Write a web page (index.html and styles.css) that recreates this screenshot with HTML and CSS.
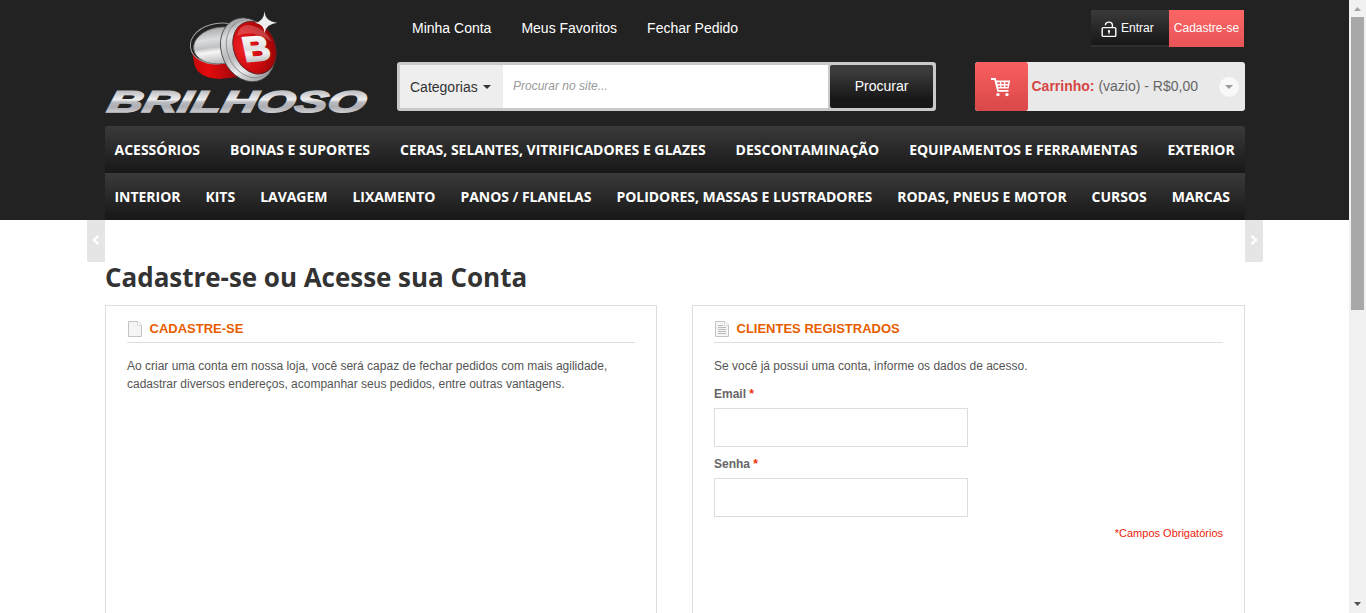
FILE: index.html
```html
<!DOCTYPE html>
<html lang="pt-BR">
<head>
<meta charset="utf-8">
<title>Brilhoso - Cadastre-se ou Acesse sua Conta</title>
<link rel="stylesheet" href="styles.css">
</head>
<body>
<div class="viewport">
<div class="page">
  <header class="header">
    <div class="container">
      <div class="header-top">
        <a class="logo">
          <svg width="270" height="112" viewBox="105 8 270 112">
            <defs>
              <linearGradient id="silver" x1="0" y1="0" x2="0" y2="1">
                <stop offset="0" stop-color="#a9aaac"/><stop offset=".3" stop-color="#dcdddf"/><stop offset=".52" stop-color="#c0c1c3"/><stop offset=".65" stop-color="#f6f6f6"/><stop offset="1" stop-color="#b4b5b7"/>
              </linearGradient>
              <linearGradient id="mark" gradientUnits="userSpaceOnUse" x1="0" y1="-25" x2="0" y2="0">
                <stop offset="0" stop-color="#fafafa"/><stop offset=".5" stop-color="#dedfe0"/><stop offset=".7" stop-color="#f4f4f4"/><stop offset="1" stop-color="#c4c5c7"/>
              </linearGradient>
              <linearGradient id="ring" x1="0" y1="0" x2="0" y2="1">
                <stop offset="0" stop-color="#9e9fa1"/><stop offset=".2" stop-color="#dedfe0"/><stop offset=".5" stop-color="#b9babc"/><stop offset=".75" stop-color="#ececed"/><stop offset="1" stop-color="#a2a3a6"/>
              </linearGradient>
              <linearGradient id="word" gradientUnits="userSpaceOnUse" x1="0" y1="-22" x2="0" y2="0">
                <stop offset="0" stop-color="#b9babd"/><stop offset=".25" stop-color="#dadadc"/><stop offset=".42" stop-color="#ececed"/><stop offset=".55" stop-color="#b9babf"/><stop offset=".75" stop-color="#adaeb4"/><stop offset="1" stop-color="#c9c9cc"/>
              </linearGradient>
              <linearGradient id="redbody"><stop offset="0" stop-color="#c30709"/><stop offset=".35" stop-color="#e50b0e"/><stop offset="1" stop-color="#9b0608"/></linearGradient>
              <radialGradient id="redlid" cx=".25" cy=".45" r=".8"><stop offset="0" stop-color="#ee2326"/><stop offset=".5" stop-color="#cf0a0d"/><stop offset="1" stop-color="#930305"/></radialGradient>
            </defs>
            <path d="M192 50 L194 63 Q197 78 220 79 L238 77 L232 55Z" fill="url(#redbody)"/>
            <ellipse cx="219" cy="43.5" rx="28.8" ry="20.3" transform="rotate(-8 219 43.5)" fill="#222" stroke="#a2a3a5" stroke-width="1"/>
            <ellipse cx="220.5" cy="45.5" rx="27" ry="18.2" transform="rotate(-8 220.5 45.5)" fill="url(#silver)" stroke="#6b6c6e" stroke-width=".8"/>
            <ellipse cx="247.7" cy="49.8" rx="26" ry="33" transform="rotate(-24 247.7 49.8)" fill="url(#ring)" stroke="#414244" stroke-width=".8"/>
            <ellipse cx="250.8" cy="48.8" rx="23.4" ry="29.8" transform="rotate(-24 250.8 48.8)" fill="none" stroke="#8b8c8f" stroke-width=".9"/>
            <ellipse cx="254.5" cy="47.7" rx="20.7" ry="27" transform="rotate(-22 254.5 47.7)" fill="url(#redlid)" stroke="#5d2022" stroke-width=".9"/>
            <path d="M237 36 Q240 22 253 26 Q265 28 272 42 Q254 29 237 36Z" fill="#fff" opacity=".22"/>
            <text x="0" y="0" transform="translate(245.2 61.8) rotate(-5) skewX(7)" class="logo-mark" textLength="27" lengthAdjust="spacingAndGlyphs" fill="url(#mark)" stroke="url(#mark)" stroke-width="1.8">B</text>
            <path d="M264.5 11 Q265 21.5 277.3 22.7 Q266 24 264.5 33 Q264 24 255 22.7 Q264 21.5 264.5 11Z" fill="#eee"/>
            <text x="0" y="0" transform="translate(106 112.3) skewX(-12)" class="logo-word" textLength="258" lengthAdjust="spacingAndGlyphs" fill="url(#word)" stroke="url(#word)" stroke-width="1.5">BRILHOSO</text>
          </svg>
        </a>
        <div class="header-main">
          <div class="header-row links-row">
            <nav class="links"><a>Minha Conta</a><a>Meus Favoritos</a><a>Fechar Pedido</a></nav>
            <div class="account">
              <a class="login">
                <svg width="16" height="17" viewBox="0 0 16 17" fill="none" stroke="#fff" stroke-width="1.4"><rect x="1.2" y="6.6" width="13.6" height="8.8" rx="1"/><path d="M4.4 4.3C4.4 0 11.4 0 11.4 4.3V6.6"/><path d="M8 9.2v3.8" stroke-width="1.2"/><circle cx="8" cy="10.2" r="1.1" fill="#fff" stroke="none"/></svg>
                <span>Entrar</span>
              </a>
              <a class="register">Cadastre-se</a>
            </div>
          </div>
          <div class="header-row">
            <form class="search">
              <div class="search-cat"><span>Categorias</span><i class="caret"></i></div>
              <div class="search-input">Procurar no site...</div>
              <div class="search-btn">Procurar</div>
            </form>
            <div class="cart">
              <div class="cart-icon">
                <svg width="20" height="19" viewBox="0 0 20 19"><path d="M0 1h4l3 11.8h10.5" fill="none" stroke="#fff" stroke-width="1.8"/><path fill="#fff" fill-rule="evenodd" d="M4 2.6h15.2l-1.6 8H6.4zM6.3 4.2v1.7h2.6V4.2zm4 0v1.7h2.6V4.2zm4 0v1.7h2.8l.3-1.7zM7 7.4l.4 1.7h1.8V7.4zm3.5 0v1.7h2.3V7.4zm3.8 0v1.7h2.1l.4-1.7z"/><circle cx="7" cy="16.6" r="1.7" fill="#fff"/><circle cx="16" cy="16.6" r="1.7" fill="#fff"/></svg>
              </div>
              <div class="cart-text"><b>Carrinho:</b> (vazio) - R$0,00</div>
              <div class="cart-toggle"><i class="caret"></i></div>
            </div>
          </div>
        </div>
      </div>
      <nav class="menu">
        <div class="menu-row wide"><a>ACESSÓRIOS</a><a>BOINAS E SUPORTES</a><a>CERAS, SELANTES, VITRIFICADORES E GLAZES</a><a>DESCONTAMINAÇÃO</a><a>EQUIPAMENTOS E FERRAMENTAS</a><a>EXTERIOR</a></div>
        <div class="menu-row"><a>INTERIOR</a><a>KITS</a><a>LAVAGEM</a><a>LIXAMENTO</a><a>PANOS / FLANELAS</a><a>POLIDORES, MASSAS E LUSTRADORES</a><a>RODAS, PNEUS E MOTOR</a><a>CURSOS</a><a>MARCAS</a></div>
      </nav>
    </div>
  </header>
  <div class="arrows">
    <span class="arrow prev"><svg width="8" height="12" viewBox="0 0 8 12"><path d="M6.3 1.8L2.2 6l4.1 4.2" fill="none" stroke="#fff" stroke-width="2.5"/></svg></span>
    <span class="arrow next"><svg width="8" height="12" viewBox="0 0 8 12"><path d="M1.7 1.8L5.8 6l-4.1 4.2" fill="none" stroke="#fff" stroke-width="2.5"/></svg></span>
  </div>
  <main class="container">
    <h1 class="title">Cadastre-se ou Acesse sua Conta</h1>
    <div class="panels">
      <section class="panel">
        <h2 class="panel-title">
          <svg width="16" height="17" viewBox="0 0 16 17"><path d="M1.5.5h9.5l3.5 3.5v11.5h-13z" fill="#f5f5f5" stroke="#c4c4c4"/><path d="M10.5.5v4h4" fill="#fff" stroke="#d8d8d8"/></svg>
          <span>CADASTRE-SE</span>
        </h2>
        <p class="copy">Ao criar uma conta em nossa loja, você será capaz de fechar pedidos com mais agilidade,<br>cadastrar diversos endereços, acompanhar seus pedidos, entre outras vantagens.</p>
      </section>
      <section class="panel right">
        <h2 class="panel-title">
          <svg width="16" height="17" viewBox="0 0 16 17"><path d="M1.5.5h9.5l3.5 3.5v11.5h-13z" fill="#f5f5f5" stroke="#c4c4c4"/><path d="M10.5.5v4h4" fill="#fff" stroke="#d8d8d8"/><path d="M4 4.5h5M4 6.5h8M4 8.5h8M4 10.5h8M4 12.5h8" stroke="#bcbcbc"/></svg>
          <span>CLIENTES REGISTRADOS</span>
        </h2>
        <p class="copy">Se você já possui uma conta, informe os dados de acesso.</p>
        <label class="label" for="email">Email <em>*</em></label>
        <input class="field" id="email" type="text">
        <label class="label" for="senha">Senha <em>*</em></label>
        <input class="field" id="senha" type="password">
        <p class="required">*Campos Obrigatórios</p>
      </section>
    </div>
  </main>
</div>
<div class="scrollbar">
  <svg class="up" width="7" height="4" viewBox="0 0 7 4"><path d="M0 4L3.5 0 7 4z" fill="#a3a3a3"/></svg>
  <div class="thumb"></div>
  <svg class="down" width="7" height="4" viewBox="0 0 7 4"><path d="M0 0l3.5 4L7 0z" fill="#505050"/></svg>
</div>
</div>
</body>
</html>
```
FILE: styles.css
```css
* { box-sizing: border-box; }
body { margin: 0; font: 12px/18px "Liberation Sans", Arial, sans-serif; color: #555; background: #fff; }
h1, h2, p { margin: 0; }
svg { display: block; flex: none; }
.viewport { display: flex; height: 613px; overflow: hidden; }
.page { width: 1349px; flex: none; }
.container { width: 1140px; margin-left: 105px; }

.header { background: #222; height: 220px; }
.header-top { display: flex; height: 126px; }
.logo { width: 292px; padding-top: 8px; }
.logo svg { overflow: visible; }
.logo-mark { font: bold 35px "Liberation Sans", sans-serif; }
.logo-word { font: italic bold 30px "Liberation Sans", sans-serif; }
.header-main { flex: 1; padding-top: 10px; white-space: nowrap; }
.header-row { display: flex; justify-content: space-between; }
.links-row { height: 52px; }
.links { display: flex; gap: 30px; padding: 9px 0 0 15px; font-size: 14px; color: #fff; }
.account { display: flex; height: 37px; color: #fff; font-size: 12px; line-height: 36px; padding-right: 1px; }
.login { display: flex; width: 78px; padding-left: 10px; gap: 4px; background: linear-gradient(#3a3a3a, #171717); border-bottom: 2px solid #303030; }
.login svg { margin-top: 11px; }
.register { width: 75px; text-align: center; background: linear-gradient(#fb6565, #e85557); }

.search { display: flex; width: 539px; height: 49px; border: 3px solid #c9c9c9; border-radius: 3px; background: #c9c9c9; }
.search-cat { display: flex; align-items: center; width: 103px; padding-left: 10px; gap: 5px; background: #eee; color: #333; font-size: 14px; }
.caret { width: 0; border: 4px solid transparent; border-top-color: currentColor; border-bottom: 0; }
.search-input { width: 325px; padding-left: 10px; background: #fff; font: italic 12px/43px "Liberation Sans", sans-serif; color: #999; }
.search-btn { width: 103px; margin-left: 2px; border-radius: 2px; background: linear-gradient(#3b3b3b 15%, #171717 80%); color: #fff; font-size: 14px; line-height: 42px; text-align: center; }

.cart { display: flex; align-items: center; width: 270px; height: 49px; border-radius: 3px; background: #e9e9e9; overflow: hidden; }
.cart-icon { display: flex; justify-content: center; align-items: center; width: 53px; height: 49px; padding: 1px 2px 0 0; border-radius: 3px; background: linear-gradient(#f95f60, #d94848); }
.cart-text { padding: 0 0 1px 3.5px; width: 191px; font-size: 14px; color: #666; }
.cart-text b { color: #d64545; }
.cart-toggle { display: flex; align-items: center; justify-content: center; width: 20px; height: 20px; border-radius: 50%; background: #f8f8f8; color: #999; }

.menu { color: #fff; font: bold 14px/47px "Open Sans", sans-serif; border-radius: 3px 3px 0 0; overflow: hidden; }
.menu-row { display: flex; gap: 25px; height: 47px; padding-left: 9.5px; white-space: nowrap; letter-spacing: -.03px; background: linear-gradient(#3a3a3a, #171717); }
.menu-row.wide { gap: 30px; letter-spacing: -.015px; }

.arrows { display: flex; justify-content: space-between; width: 1176px; height: 42px; margin-left: 87px; }
.arrow { display: flex; align-items: center; justify-content: center; width: 18px; height: 42px; padding-bottom: 3px; background: #e5e5e5; }
.prev { border-radius: 0 0 0 2px; }
.next { border-radius: 0 0 2px 0; }

.title { height: 43px; color: #333; font: bold 26px/30px "Open Sans", sans-serif; letter-spacing: -.03px; white-space: nowrap; }
.panels { display: flex; justify-content: space-between; }
.panel { width: 552px; height: 400px; border: 1px solid #ddd; padding: 13px 21px; }
.panel.right { width: 553px; }
.panel-title { display: flex; gap: 6.5px; height: 24px; border-bottom: 1px solid #ddd; color: #e85d00; font-size: 13px; font-weight: bold; line-height: 19px; }
.panel-title svg { margin-top: 2px; }
.copy { padding-top: 14px; white-space: nowrap; }
.label { display: block; margin-top: 10px; height: 23px; font-weight: bold; color: #666; }
.label em { font-style: normal; color: #eb340a; }
.field { display: block; width: 254px; height: 39px; border: 1px solid #ddd; background: #fff; padding: 0 8px; margin: 0 0 -2px; }
.required { margin-top: 9px; text-align: right; font-size: 11px; color: #eb1c0a; }

.scrollbar { display: flex; flex-direction: column; align-items: center; width: 17px; background: #f1f1f1; }
.up { margin: 7px 0 6px; }
.thumb { width: 13px; height: 293px; background: #a8a8a8; }
.down { margin: auto 0 7px; }
```
